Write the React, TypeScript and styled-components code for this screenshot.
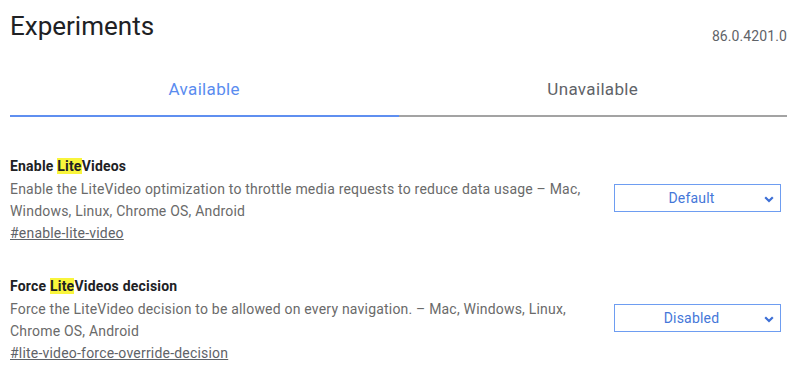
import React from "react";
import styled, { createGlobalStyle } from "styled-components";

const GlobalStyle = createGlobalStyle`
  html, body {
    margin: 0;
    padding: 0;
    background: #ffffff;
  }
  body {
    font-family: Roboto, "Liberation Sans", Arial, sans-serif;
    color: #202124;
  }
`;

const Page = styled.div`
  padding: 0 13px 0 10px;
`;

const Header = styled.header`
  display: flex;
  justify-content: space-between;
  align-items: flex-start;
  padding-top: 11px;
`;

const Title = styled.h1`
  margin: 0;
  font-size: 26px;
  line-height: 30px;
  font-weight: 400;
  color: #202124;
`;

const Version = styled.span`
  margin-top: 15px;
  font-size: 14px;
  line-height: 20px;
  letter-spacing: 0.1px;
  color: #5f6368;
`;

const TabBar = styled.nav`
  display: flex;
  margin-top: 17px;
`;

interface ITab {
  active?: boolean;
}

const Tab = styled.button<ITab>`
  flex: 1;
  padding: 16px 0 16px;
  border: none;
  border-bottom: 2px solid ${({ active }) => (active ? "#5f8ff0" : "#a3a3a3")};
  background: none;
  font-family: inherit;
  font-size: 17px;
  line-height: 20px;
  letter-spacing: 0.35px;
  color: ${({ active }) => (active ? "#5a8cef" : "#5f6368")};
  cursor: pointer;
`;

const FlagList = styled.div`
  display: flex;
  flex-direction: column;
  gap: 32px;
  margin-top: 39px;
`;

const FlagRow = styled.section`
  display: flex;
  justify-content: space-between;
  align-items: center;
  padding-right: 6px;
`;

const FlagText = styled.div`
  width: 584px;
  letter-spacing: 0.2px;
`;

const FlagName = styled.h3`
  margin: 0 0 2px;
  font-size: 14px;
  line-height: 20px;
  font-weight: 700;
  color: #202124;
`;

const Highlight = styled.span`
  background: #f9f53c;
`;

const Description = styled.p`
  margin: 0;
  font-size: 14px;
  line-height: 22px;
  color: #6a6a6a;
`;

const Permalink = styled.a`
  display: block;
  font-size: 14px;
  line-height: 22px;
  color: #5f6368;
  text-decoration: underline;
`;

const SelectBox = styled.div`
  position: relative;
  display: flex;
  align-items: center;
  justify-content: center;
  box-sizing: border-box;
  width: 167px;
  height: 28px;
  margin-bottom: 4px;
  padding-right: 12px;
  border: 1px solid #6e9df1;
  font-size: 14px;
  letter-spacing: 0.2px;
  color: #4577d9;
  cursor: pointer;
`;

const Chevron = styled.svg`
  position: absolute;
  right: 6px;
  top: 11px;
`;

interface IFlag {
  before: string;
  after: string;
  description: string;
  hash: string;
  value: string;
}

const flags: IFlag[] = [
  {
    before: "Enable ",
    after: "Videos",
    description:
      "Enable the LiteVideo optimization to throttle media requests to reduce data usage – Mac, Windows, Linux, Chrome OS, Android",
    hash: "#enable-lite-video",
    value: "Default",
  },
  {
    before: "Force ",
    after: "Videos decision",
    description:
      "Force the LiteVideo decision to be allowed on every navigation. – Mac, Windows, Linux, Chrome OS, Android",
    hash: "#lite-video-force-override-decision",
    value: "Disabled",
  },
];

const Flag: React.FC<{ flag: IFlag }> = ({ flag }) => (
  <FlagRow>
    <FlagText>
      <FlagName>
        {flag.before}
        <Highlight>Lite</Highlight>
        {flag.after}
      </FlagName>
      <Description>{flag.description}</Description>
      <Permalink href={flag.hash}>{flag.hash}</Permalink>
    </FlagText>
    <SelectBox role="listbox" aria-label={flag.value}>
      {flag.value}
      <Chevron width="10" height="7" viewBox="0 0 10 7">
        <polyline
          points="1.2,1.2 5,5 8.8,1.2"
          fill="none"
          stroke="#3d6fd6"
          strokeWidth="2.2"
        />
      </Chevron>
    </SelectBox>
  </FlagRow>
);

const App: React.FC = () => (
  <Page>
    <GlobalStyle />
    <Header>
      <Title>Experiments</Title>
      <Version>86.0.4201.0</Version>
    </Header>
    <TabBar>
      <Tab active>Available</Tab>
      <Tab>Unavailable</Tab>
    </TabBar>
    <FlagList>
      {flags.map((f) => (
        <Flag key={f.hash} flag={f} />
      ))}
    </FlagList>
  </Page>
);

export default App;
